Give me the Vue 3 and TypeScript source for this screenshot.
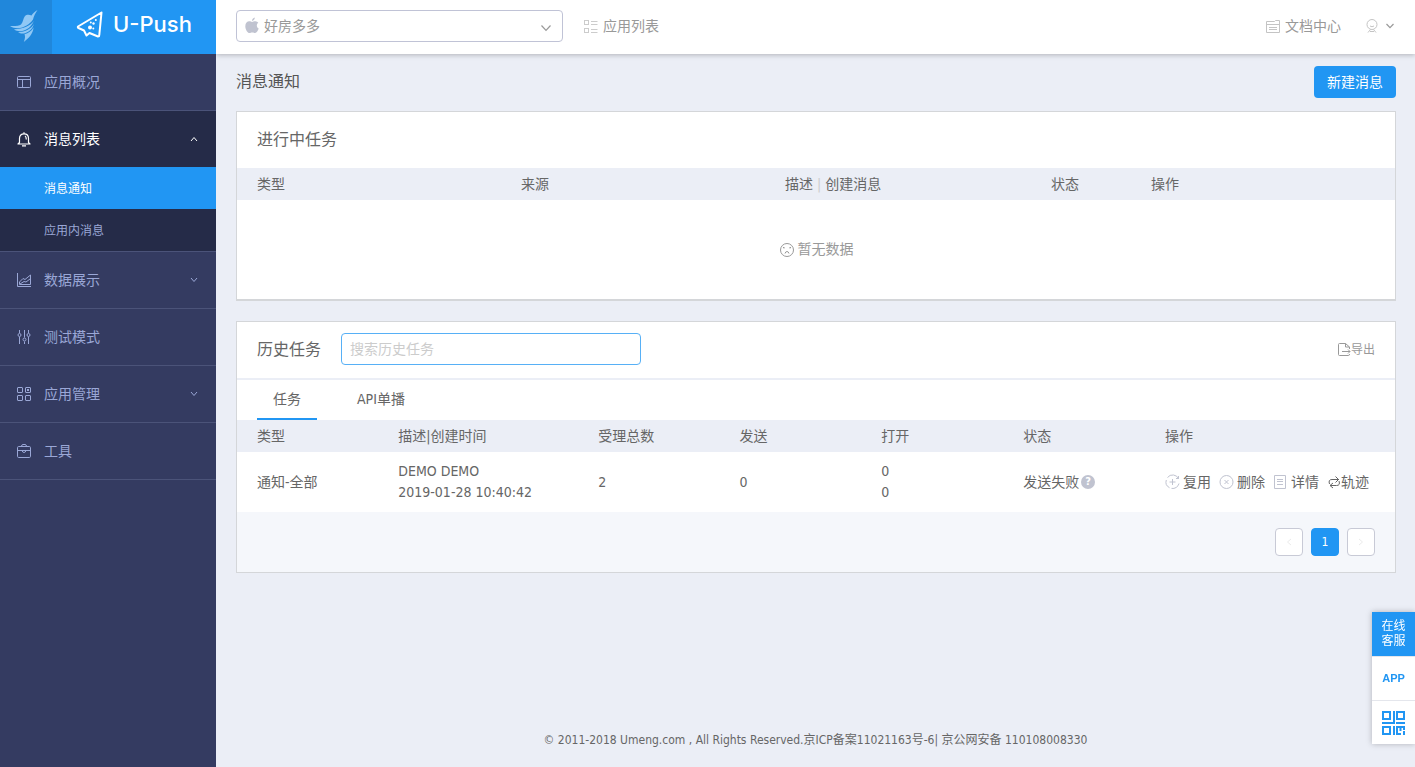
<script setup lang="ts">
import { ref } from 'vue'

interface NavItem {
  key: string
  label: string
  arrow?: 'up' | 'down'
  children?: { label: string; current: boolean }[]
}

interface Task {
  type: string
  name: string
  time: string
  accepted: number
  sent: number
  opened: number[]
  status: string
}

const nav: NavItem[] = [
  { key: 'overview', label: '应用概况' },
  {
    key: 'messages',
    label: '消息列表',
    arrow: 'up',
    children: [
      { label: '消息通知', current: true },
      { label: '应用内消息', current: false },
    ],
  },
  { key: 'data', label: '数据展示', arrow: 'down' },
  { key: 'test', label: '测试模式' },
  { key: 'manage', label: '应用管理', arrow: 'down' },
  { key: 'tools', label: '工具' },
]

const tasks: Task[] = [
  {
    type: '通知-全部',
    name: 'DEMO DEMO',
    time: '2019-01-28 10:40:42',
    accepted: 2,
    sent: 0,
    opened: [0, 0],
    status: '发送失败',
  },
]

const tabs = ['任务', 'API单播']
const activeTab = ref(0)
const keyword = ref('')
const app = ref('好房多多')
</script>

<template>
  <div class="layout">
    <aside class="sidebar">
      <div class="brand">
        <a class="brand-home" href="#" aria-label="Umeng">
          <svg width="30" height="34" viewBox="0 0 30 34" fill="#90c8f5">
            <path d="M28.500 1 C25 3 23.500 5 22.500 6.500 C20.500 5.500 17.500 5.300 16 7 C14 9.500 14.300 13 12 15.500 C10 17 6 17.200 1 17 C3 18.500 6 19.200 8.500 19.200 C15 19 21 15 24 10.500 C24.800 7 26.500 4 28.500 1Z" />
            <path d="M24.800 12 C21.500 16.500 14.500 20 5 20.300 C7 22 9.500 22.400 12 22.200 C18 21.500 22.500 17.500 24.800 12Z" />
            <path d="M24.800 15 C22.500 19.500 16.500 23 9 23.300 C11 24.700 14 24.700 16 24.200 C20.500 22.500 24 19.500 24.800 15Z" />
            <path d="M24.500 18.500 C22.500 22 19.500 24.300 15.500 25.300 C16.500 27.500 16 30 14.800 33 C19.500 29.500 24.200 24.500 24.500 18.500Z" />
          </svg>
        </a>
        <a class="brand-name" href="#">
          <svg width="28" height="28" viewBox="0 0 28 28" fill="none" stroke="#fff" stroke-width="2" stroke-linejoin="round">
            <path d="M25.500 1.500 L2 15.500 Q1.500 16.500 2.500 17 L8 19.500 L10.500 24.500 L13.500 22 L22 25.500 Q23.300 25.500 23.300 24 Z" />
            <g fill="#fff" stroke="none">
              <circle cx="14" cy="16.500" r="2" />
              <circle cx="17.500" cy="12.500" r="1.200" />
              <circle cx="19.800" cy="9" r="1" />
              <circle cx="14.800" cy="11.500" r="1" />
              <circle cx="17.300" cy="17.600" r="1" />
            </g>
          </svg>
          <span>U-Push</span>
        </a>
      </div>

      <nav>
        <div v-for="item in nav" :key="item.key" class="nav-group" :class="{ open: item.children }">
          <a class="nav-item" href="#">
            <svg class="nav-icon" width="16" height="16" viewBox="0 0 16 16" fill="none" stroke="currentColor">
              <g v-if="item.key === 'overview'">
                <rect x="1.500" y="2.500" width="13" height="11" rx="1" />
                <path d="M1.500 5.500H14.500M6.500 5.500V13.500" />
              </g>
              <g v-else-if="item.key === 'messages'" stroke-width="1.200">
                <path d="M3.500 11.500V7.500C3.500 4.500 5.300 2.800 8 2.800S12.500 4.500 12.500 7.500V11.500L14 13H2L3.500 11.500Z" stroke-linejoin="round" />
                <path d="M8 2.800V1.200M6 14.800H10M9 5C10 5.500 10.300 6.500 10.300 8.500" />
              </g>
              <g v-else-if="item.key === 'data'">
                <path d="M1.500 1V14.500H15M3.500 12.500V10L7 6.500L9 7.500L14.500 3V12.500Z" />
                <path d="M4 12L8 9.500L10 10L14 7" />
              </g>
              <g v-else-if="item.key === 'test'">
                <path d="M3.500 1V4M3.500 8V15M8.500 1V8.500M8.500 12.500V15M12.500 1V4M12.500 8V15" />
                <circle cx="3.500" cy="6" r="1.500" />
                <circle cx="8.500" cy="10.500" r="1.500" />
                <circle cx="12.500" cy="6" r="1.500" />
              </g>
              <g v-else-if="item.key === 'manage'">
                <rect x="1.500" y="1.500" width="5" height="5" rx="0.500" />
                <rect x="9.500" y="1.500" width="5" height="5" rx="0.500" />
                <rect x="1.500" y="9.500" width="5" height="5" rx="0.500" />
                <rect x="9.500" y="9.500" width="5" height="5" rx="0.500" />
                <rect x="11.500" y="3.500" width="1" height="1" />
              </g>
              <g v-else>
                <rect x="1.500" y="3.500" width="13" height="11" rx="1.200" />
                <path d="M5.500 3.500Q5.500 1.500 7 1.500H9Q10.500 1.500 10.500 3.500M1.500 7.500H14.500M6 7.500Q6.500 9.500 8 9.500T10 7.500" />
              </g>
            </svg>
            <span class="nav-label">{{ item.label }}</span>
            <svg v-if="item.arrow" width="8" height="6" viewBox="0 0 8 6" fill="none" stroke="currentColor">
              <path :d="item.arrow === 'up' ? 'M1 5L4 1.500L7 5' : 'M1 1L4 4.500L7 1'" />
            </svg>
          </a>
          <a v-for="child in item.children" :key="child.label" class="sub-item" :class="{ current: child.current }" href="#">
            {{ child.label }}
          </a>
        </div>
      </nav>
    </aside>

    <div class="page">
      <header class="topbar">
        <label class="app-picker">
          <svg class="apple" width="14" height="17" viewBox="0 0 14 17" fill="#c0c3d0">
            <path d="M9.800 0.500C9.900 2.200 8.600 3.800 7 3.900C6.800 2.300 8.300 0.700 9.800 0.500Z" />
            <path d="M7.100 4.900C8 4.900 8.900 4.100 10.400 4.200C11.700 4.300 12.700 4.800 13.300 5.800C11.200 7.200 11.300 10.400 13.700 11.500C13 13.500 11.700 16 10.100 16C9 16 8.700 15.400 7.300 15.400S5.500 16 4.500 16C2.600 16 0.300 12.500 0.300 9.200C0.300 6 2.300 4.300 4.200 4.300C5.500 4.300 6.400 4.900 7.100 4.900Z" />
          </svg>
          <select v-model="app" aria-label="选择应用">
            <option>好房多多</option>
          </select>
          <svg class="caret" width="12" height="8" viewBox="0 0 12 8" fill="none" stroke="#999" stroke-width="1.200">
            <path d="M1.500 1.500L6 6.300L10.500 1.500" />
          </svg>
        </label>
        <a class="top-link" href="#">
          <svg width="16" height="16" viewBox="0 0 16 16" fill="none" stroke="#ccc">
            <rect x="1.500" y="2.500" width="4" height="4" />
            <rect x="1.500" y="10.500" width="4" height="4" />
            <path d="M8 3.500H14.500M8 6.500H14.500M8 11.500H14.500M8 14.500H14.500" />
          </svg>
          <span>应用列表</span>
        </a>
        <a class="top-link docs" href="#">
          <svg width="16" height="16" viewBox="0 0 16 16" fill="none" stroke="#c4c4c4">
            <path d="M1.500 3.500H9.500L10.500 2.500H14.500V14.500H1.500ZM1.500 6.500H14.500M4 9.500H12M4 11.500H12" />
          </svg>
          <span>文档中心</span>
        </a>
        <button class="user" type="button" aria-label="账号">
          <svg width="14" height="16" viewBox="0 0 14 16" fill="none" stroke="#c4c4c4">
            <circle cx="7" cy="6.500" r="5" />
            <path d="M5 8Q7 9.500 9 8M5.500 11.500L3 14.500M8.500 11.500L11 14.500M5 13.500H9" />
          </svg>
          <svg width="10" height="6" viewBox="0 0 10 6" fill="none" stroke="#999" stroke-width="1.200">
            <path d="M1.500 1L5 4.600L8.500 1" />
          </svg>
        </button>
      </header>

      <main>
        <div class="page-head">
          <h1>消息通知</h1>
          <button class="primary" type="button">新建消息</button>
        </div>

        <section class="card ongoing">
          <h2 class="card-title">进行中任务</h2>
          <table>
            <colgroup>
              <col class="col-wide" /><col class="col-wide" /><col /><col class="col-status" /><col class="col-wide" />
            </colgroup>
            <thead>
              <tr>
                <th>类型</th>
                <th>来源</th>
                <th>描述 <span class="bar">|</span> 创建消息</th>
                <th>状态</th>
                <th>操作</th>
              </tr>
            </thead>
            <tbody>
              <tr>
                <td class="empty" colspan="5">
                  <div class="empty-note">
                    <svg width="16" height="16" viewBox="0 0 16 16" fill="none" stroke="#999">
                      <circle cx="8" cy="8" r="6.500" />
                      <path d="M4 5.500H5.500M10.500 5.500H12M5 6.500V7M11 6.500V7M6 11.500Q6.500 9.500 8 9.500T10 11.500" />
                    </svg>
                    <span>暂无数据</span>
                  </div>
                </td>
              </tr>
            </tbody>
          </table>
        </section>

        <section class="card">
          <div class="history-head">
            <h2>历史任务</h2>
            <input v-model="keyword" type="text" placeholder="搜索历史任务" aria-label="搜索历史任务" />
            <button class="export" type="button">
              <svg width="14" height="16" viewBox="0 0 14 16" fill="none" stroke="currentColor">
                <path d="M12.500 7V5L8.500 1.500H2.500Q1.500 1.500 1.500 2.500V12.500Q1.500 13.500 2.500 13.500H11.500Q12.500 13.500 12.500 12M8.500 1.500V5H12.500M5 9.500H13M11 7.500L13 9.500L11 11.500" />
              </svg>
              <span>导出</span>
            </button>
          </div>
          <div class="tabs" role="tablist">
            <button
              v-for="(tab, i) in tabs"
              :key="tab"
              type="button"
              role="tab"
              class="tab"
              :class="{ active: i === activeTab }"
              :aria-selected="i === activeTab"
              @click="activeTab = i"
            >
              {{ tab }}
            </button>
          </div>
          <table>
            <colgroup>
              <col class="col-type" /><col class="col-desc" /><col class="col-type" /><col /><col /><col /><col class="col-actions" />
            </colgroup>
            <thead>
              <tr>
                <th>类型</th>
                <th>描述|创建时间</th>
                <th>受理总数</th>
                <th>发送</th>
                <th>打开</th>
                <th>状态</th>
                <th>操作</th>
              </tr>
            </thead>
            <tbody>
              <tr v-for="task in tasks" :key="task.time" class="task-row">
                <td>{{ task.type }}</td>
                <td>{{ task.name }}<br />{{ task.time }}</td>
                <td>{{ task.accepted }}</td>
                <td>{{ task.sent }}</td>
                <td><div v-for="(n, i) in task.opened" :key="i">{{ n }}</div></td>
                <td>
                  <div class="status">
                    <span>{{ task.status }}</span>
                    <span class="help">?</span>
                  </div>
                </td>
                <td>
                  <div class="actions">
                    <button type="button">
                      <svg width="15" height="16" viewBox="0 0 15 16" fill="none" stroke="#c0c3d0">
                        <path d="M13.700 5A6.500 6.500 0 0 0 2.500 3.500M1.300 6A6.500 6.500 0 0 0 4.500 13.700M6.500 14.400A6.500 6.500 0 0 0 14 9.500M11 4.500H13.500V2M7.500 5V11M4.500 8H10.500" />
                      </svg>
                      <span>复用</span>
                    </button>
                    <button type="button">
                      <svg width="15" height="16" viewBox="0 0 15 16" fill="none" stroke="#c0c3d0">
                        <circle cx="7.500" cy="8" r="6.500" />
                        <path d="M5.500 6L9.500 10M9.500 6L5.500 10" />
                      </svg>
                      <span>删除</span>
                    </button>
                    <button type="button">
                      <svg width="15" height="16" viewBox="0 0 15 16" fill="none" stroke="#c0c3d0">
                        <path d="M1.500 1.500H12.500V14.500H1.500ZM4 5.500H10M4 7.500H10M4 10.500H10" />
                      </svg>
                      <span>详情</span>
                    </button>
                    <button class="track" type="button">
                      <svg width="14" height="16" viewBox="0 0 14 16" fill="none" stroke="#666">
                        <path d="M2.500 10Q1 5.500 5 5.500H12M8.500 2.500L11.500 5.500L8.500 8.500M12 7Q13.500 11.500 9.500 11.500H3M6 9L3 11.500L6 14" />
                      </svg>
                      <span>轨迹</span>
                    </button>
                  </div>
                </td>
              </tr>
            </tbody>
          </table>
          <div class="pager">
            <button type="button" disabled aria-label="上一页">
              <svg width="6" height="8" viewBox="0 0 6 8" fill="none" stroke="#ebebeb"><path d="M5 1L1.500 4L5 7" /></svg>
            </button>
            <button class="on" type="button">1</button>
            <button type="button" disabled aria-label="下一页">
              <svg width="6" height="8" viewBox="0 0 6 8" fill="none" stroke="#ebebeb"><path d="M1 1L4.500 4L1 7" /></svg>
            </button>
          </div>
        </section>
      </main>

      <footer>© 2011-2018 Umeng.com , All Rights Reserved.京ICP备案11021163号-6| 京公网安备 110108008330</footer>
    </div>

    <div class="float">
      <a class="service" href="#">在线<br />客服</a>
      <a class="app-link" href="#">APP</a>
      <a href="#" aria-label="二维码">
        <svg width="24" height="26" viewBox="0 0 24 26" fill="none" stroke="#2196f3" stroke-width="2">
          <path d="M1 2H8V9H1ZM15 2H22V9H15ZM1 17H8V24H1ZM12 1V13M0 13H13M14 13H23M12 16V25M15 16V24H19M22 21V25M14 17H22V20M18.500 17V21" />
        </svg>
      </a>
    </div>
  </div>
</template>

<style>
body {
  margin: 0;
  background: #ebeef6;
}
</style>

<style scoped>
.layout,
.layout * {
  box-sizing: border-box;
}

.layout {
  display: flex;
  min-height: 100vh;
  font-family: Tahoma, 'DejaVu Sans Condensed', 'Noto Sans CJK SC', sans-serif;
  font-size: 14px;
  line-height: 21px;
  color: #666;
}

a {
  color: inherit;
  text-decoration: none;
}

button,
input,
select {
  margin: 0;
  padding: 0;
  border: 0;
  background: none;
  font: inherit;
  color: inherit;
}

button {
  cursor: pointer;
}

svg {
  display: block;
  flex: none;
}

h1,
h2 {
  margin: 0;
  font-size: 16px;
  font-weight: 400;
  line-height: 24px;
}

.sidebar {
  flex: none;
  width: 216px;
  background: #343b61;
  color: #9aa7d6;
}

.brand {
  display: flex;
  height: 54px;
  background: #2196f3;
  color: #fff;
}

.brand-home {
  display: flex;
  align-items: center;
  justify-content: center;
  width: 52px;
  padding: 0 4px 2px 0;
  background: #2087db;
}

.brand-name {
  display: flex;
  flex: 1;
  align-items: center;
  justify-content: center;
  gap: 9px;
  padding-bottom: 5px;
  font-family: Inter, 'Liberation Sans', sans-serif;
  font-size: 22px;
  font-weight: 500;
}

.nav-group {
  border-bottom: 1px solid #4b5379;
}

.nav-group.open {
  background: #252b48;
}

.nav-item {
  display: flex;
  align-items: center;
  height: 56px;
  padding: 0 18px 0 16px;
}

.open .nav-item {
  color: #fff;
}

.nav-label {
  flex: 1;
  margin-left: 12px;
}

.sub-item {
  display: block;
  padding: 2px 0 0 44px;
  font-size: 12px;
  line-height: 40px;
}

.sub-item.current {
  background: #2196f3;
  color: #fff;
}

.page {
  display: flex;
  flex: 1;
  flex-direction: column;
  min-width: 0;
}

.topbar {
  display: flex;
  align-items: center;
  height: 54px;
  padding: 0 20px 2px;
  background: #fff;
  box-shadow: 0 1px 5px rgba(0, 0, 0, 0.25);
  clip-path: inset(0 0 -8px 0);
  color: #999;
}

.app-picker {
  position: relative;
  width: 327px;
}

.app-picker select {
  display: block;
  width: 100%;
  height: 32px;
  padding: 0 27px;
  border: 1px solid #c0c3d6;
  border-radius: 4px;
  appearance: none;
}

.apple {
  position: absolute;
  top: 7px;
  left: 9px;
}

.caret {
  position: absolute;
  top: 14px;
  right: 11px;
}

.top-link {
  display: flex;
  align-items: center;
  gap: 4px;
  margin-left: 20px;
}

.docs {
  margin-left: auto;
}

.user {
  display: flex;
  align-items: center;
  gap: 6px;
  margin-left: 24px;
}

main {
  padding: 12px 19px 0 20px;
}

.page-head {
  display: flex;
  align-items: center;
  justify-content: space-between;
  margin-bottom: 13px;
}

h1 {
  color: #555;
}

.primary {
  height: 32px;
  padding: 0 13px;
  border-radius: 4px;
  background: #2196f3;
  color: #fff;
}

.card {
  border: 1px solid #d4d6d9;
  background: #fff;
}

.ongoing {
  margin-bottom: 20px;
  border-bottom-width: 2px;
}

.card-title {
  padding: 16px 20px;
}

table {
  width: 100%;
  border-collapse: collapse;
  table-layout: fixed;
}

.col-wide {
  width: 22.8%;
}

.col-status {
  width: 100px;
}

.col-type {
  width: 12.2%;
}

.col-desc {
  width: 200px;
}

.col-actions {
  width: 250px;
}

th,
td {
  padding: 0 20px;
  font-weight: 400;
  text-align: left;
  white-space: nowrap;
}

th {
  height: 32px;
  background: #ebeef6;
}

.bar {
  color: #ccc;
}

.empty {
  height: 99px;
  color: #999;
}

.empty-note {
  display: flex;
  align-items: center;
  justify-content: center;
  gap: 3px;
}

.history-head {
  display: flex;
  align-items: center;
  height: 58px;
  padding: 0 20px;
  border-bottom: 2px solid #ebeef6;
}

.history-head input {
  width: 300px;
  height: 32px;
  margin: 0 0 2px 20px;
  padding: 0 8px;
  border: 1px solid #57b0f6;
  border-radius: 4px;
}

.history-head input::placeholder {
  color: #ccc;
  opacity: 1;
}

.export {
  display: flex;
  align-items: center;
  margin-left: auto;
  font-size: 12px;
  color: #999;
}

.tabs {
  display: flex;
  gap: 24px;
  height: 40px;
  padding: 0 20px;
}

.tab {
  padding: 0 16px;
  border-bottom: 2px solid transparent;
}

.tab.active {
  border-bottom-color: #2196f3;
}

.task-row {
  height: 60px;
}

.status,
.actions,
.actions button {
  display: flex;
  align-items: center;
}

.status {
  gap: 2px;
}

.help {
  width: 14px;
  height: 14px;
  border-radius: 50%;
  background: #c0c3d0;
  font-size: 11px;
  font-weight: 700;
  line-height: 14px;
  text-align: center;
  color: #fff;
}

.actions {
  gap: 8px;
}

.actions button {
  gap: 3px;
}

.actions .track {
  gap: 0;
}

.pager {
  display: flex;
  justify-content: flex-end;
  gap: 8px;
  padding: 16px 20px;
  background: #f5f7fb;
}

.pager button {
  display: flex;
  align-items: center;
  justify-content: center;
  width: 28px;
  height: 28px;
  border: 1px solid #c8cad6;
  border-radius: 4px;
  background: #fff;
  font-size: 12px;
}

.pager .on {
  border-color: #2196f3;
  background: #2196f3;
  color: #fff;
}

footer {
  margin-top: auto;
  padding: 20px 0 18px;
  font-size: 12px;
  line-height: 18px;
  text-align: center;
}

.float {
  position: fixed;
  right: 0;
  bottom: 23px;
  width: 43px;
  background: #fff;
  box-shadow: 0 0 6px rgba(0, 0, 0, 0.25);
}

.float a {
  display: flex;
  align-items: center;
  justify-content: center;
  height: 44px;
  border-top: 1px solid #e4e6ec;
}

.float .service {
  border-top: 0;
  background: #2196f3;
  font-size: 12px;
  line-height: 15px;
  color: #fff;
}

.float .app-link {
  font-family: 'Liberation Sans', sans-serif;
  font-size: 11px;
  font-weight: 700;
  color: #2196f3;
}
</style>
